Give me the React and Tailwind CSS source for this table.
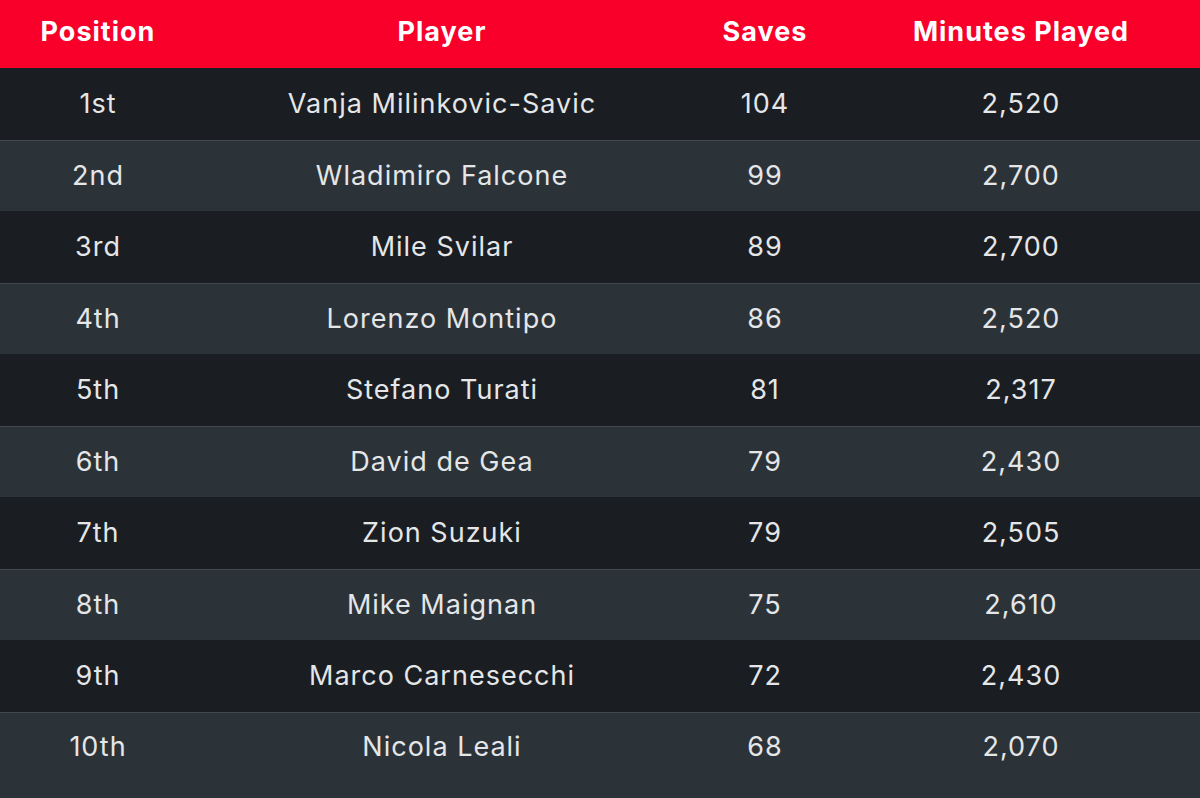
const rows = [
  ['1st', 'Vanja Milinkovic-Savic', '104', '2,520'],
  ['2nd', 'Wladimiro Falcone', '99', '2,700'],
  ['3rd', 'Mile Svilar', '89', '2,700'],
  ['4th', 'Lorenzo Montipo', '86', '2,520'],
  ['5th', 'Stefano Turati', '81', '2,317'],
  ['6th', 'David de Gea', '79', '2,430'],
  ['7th', 'Zion Suzuki', '79', '2,505'],
  ['8th', 'Mike Maignan', '75', '2,610'],
  ['9th', 'Marco Carnesecchi', '72', '2,430'],
  ['10th', 'Nicola Leali', '68', '2,070'],
];

const cols = 'grid grid-cols-[196px_492px_154px_1fr]';

export default function App() {
  return (
    <div className="flex h-[798px] w-full flex-col bg-[#2c3338] font-['Inter',sans-serif] tracking-[1px]">
      {/* header */}
      <div className={`${cols} h-[68px] shrink-0 items-center bg-[#f8002a] pb-[4px] text-[27px] font-bold text-white`}>
        <div className="text-center">Position</div>
        <div className="text-center">Player</div>
        <div className="text-center">Saves</div>
        <div className="text-center">Minutes Played</div>
      </div>

      {rows.map((r, i) => (
        <div
          key={r[0]}
          className={`${cols} items-center text-[27px] text-[#e4e6e8] ${
            i % 2 === 0
              ? 'h-[71.5px] shrink-0 bg-[#1a1d21]'
              : i === rows.length - 1
              ? 'flex-1 border-t border-[#41484e] bg-[#2c3338] pb-[16px]'
              : 'h-[71.5px] shrink-0 border-t border-[#41484e] bg-[#2c3338]'
          }`}
        >
          <div className="text-center">{r[0]}</div>
          <div className="text-center">{r[1]}</div>
          <div className="text-center">{r[2]}</div>
          <div className="text-center">{r[3]}</div>
        </div>
      ))}
    </div>
  );
}
